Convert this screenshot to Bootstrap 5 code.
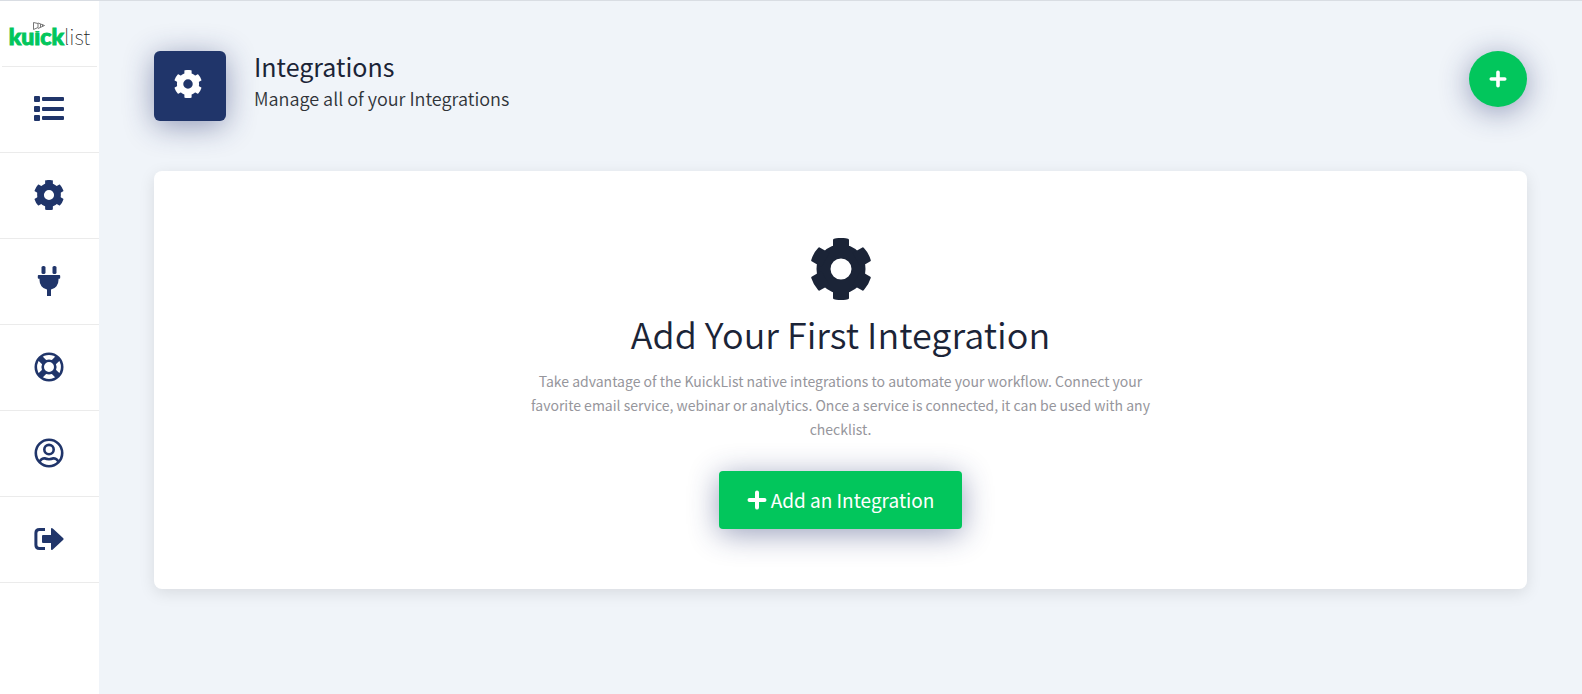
<!DOCTYPE html>
<html lang="en">
<head>
<meta charset="utf-8">
<meta name="viewport" content="width=device-width, initial-scale=1">
<title>KuickList – Integrations</title>
<link href="https://cdn.jsdelivr.net/npm/bootstrap@5.3.0/dist/css/bootstrap.min.css" rel="stylesheet">
<style>
  :root { --navy: #20356a; --ink: #1b2437; --green: #02c65c; }
  body { background: #f0f4f9; color: var(--ink); font-family: "Noto Sans CJK SC", "Noto Sans", sans-serif; }
  .app-shell { min-height: 100vh; border-top: 1px solid #d9dde3; }
  .side-menu { width: 99px; background: #fff; }
  .brand { height: 66px; margin: 0 2px; padding-top: 4px; border-bottom: 1px solid #ebebeb; position: relative; color: #222; text-decoration: none; font-size: 21px; line-height: 24px; font-weight: 100; }
  .brand strong { color: var(--green); font-family: Lato, sans-serif; font-weight: 900; font-size: 23px; -webkit-text-stroke: 1px var(--green); }
  .brand svg { position: absolute; left: 30px; top: 20px; background: #fff; }
  .side-link { height: 86px; padding: 0 2px 2px 0; border-bottom: 1px solid #ebebeb; color: var(--navy); }
  .side-link:hover { background: #f7f9fc; }
  .page { padding: 50px 55px; }
  .glow { box-shadow: 0 5px 30px rgba(32, 45, 106, .45); }
  .page-tile { width: 72px; height: 70px; padding: 0 4px 4px 0; border-radius: 6px; background: var(--navy); color: #fff; }
  .page-title { font-size: 25px; line-height: 30px; font-weight: 400; }
  .page-sub { margin-top: 2px; font-size: 18px; line-height: 30px; font-weight: 350; color: #2f3338; }
  .add-round { width: 58px; height: 56px; border-radius: 50%; background: var(--green); color: #fff; }
  .empty-card { margin-top: 50px; padding: 67px 24px 60px; border: 0; border-radius: 8px; box-shadow: 0 4px 16px rgba(0, 0, 0, .1); }
  .empty-title { margin: 9px 0 12px; font-size: 36px; line-height: 48px; font-weight: 350; }
  .empty-text { max-width: 640px; margin-bottom: 30px; font-size: 14px; line-height: 24px; color: #96969c; }
  .btn-add { height: 58px; padding: 0 28px; border-radius: 4px; font-size: 19px; line-height: 24px; }
  .btn-add, .btn-add:hover, .add-round:hover { background: var(--green); color: #fff; }
</style>
</head>
<body>
<svg width="0" height="0" class="position-absolute" aria-hidden="true">
  <defs>
    <path id="tooth" d="M-8 -18V-29.300Q-8 -30 -7 -30.300A31 31 0 0 1 7 -30.300Q8 -30 8 -29.300V-18Z"/>
    <symbol id="gear" viewBox="-31 -31 62 62">
      <circle r="17.500" fill="none" stroke="currentColor" stroke-width="14"/>
      <g fill="currentColor">
        <use href="#tooth"/><use href="#tooth" transform="rotate(60)"/><use href="#tooth" transform="rotate(120)"/>
        <use href="#tooth" transform="rotate(180)"/><use href="#tooth" transform="rotate(240)"/><use href="#tooth" transform="rotate(300)"/>
      </g>
    </symbol>
    <symbol id="plus" viewBox="0 0 20 20">
      <path d="M10 2.500V17.500M2.500 10H17.500" stroke="currentColor" stroke-width="4" stroke-linecap="round"/>
    </symbol>
  </defs>
</svg>

<div class="app-shell d-flex">
  <nav class="side-menu flex-shrink-0 d-flex flex-column" aria-label="Main">
    <a class="brand d-flex align-items-center justify-content-center" href="#">
      <strong>kuick</strong><span>list</span>
      <svg width="14" height="10" viewBox="0 0 14 10" fill="none" stroke="#777" aria-hidden="true"><path d="M1.500 1.500L6 2.500V6.500L1.500 8.500Z"/><path d="M6 2L12.500 4.500L6 7.500M8.500 3V6.500M10.500 3.500V5.500"/></svg>
    </a>
    <a class="side-link d-flex align-items-center justify-content-center" href="#" aria-label="Checklists">
      <svg width="30" height="30" viewBox="0 0 30 30" fill="currentColor"><rect y="2" width="6" height="6" rx="1"/><rect y="12" width="6" height="6" rx="1"/><rect y="21" width="6" height="6" rx="1"/><rect x="8" y="3" width="22" height="4" rx="1"/><rect x="8" y="13" width="22" height="4" rx="1"/><rect x="8" y="22" width="22" height="4" rx="1"/></svg>
    </a>
    <a class="side-link d-flex align-items-center justify-content-center" href="#" aria-label="Settings">
      <svg width="30" height="30"><use href="#gear"/></svg>
    </a>
    <a class="side-link d-flex align-items-center justify-content-center" href="#" aria-label="Integrations">
      <svg width="30" height="30" viewBox="0 0 30 30" fill="currentColor"><rect x="7.500" width="4" height="8" rx="1.600"/><rect x="18.500" width="4" height="8" rx="1.600"/><path d="M4.600 9H25.400Q26.200 9 26.200 9.900V11.800Q26.200 12.700 25.400 12.700H24.500V14A9.500 9.500 0 0 1 17 23.600V30H13V23.600A9.500 9.500 0 0 1 5.500 14V12.700H4.600Q3.800 12.700 3.800 11.800V9.900Q3.800 9 4.600 9Z"/></svg>
    </a>
    <a class="side-link d-flex align-items-center justify-content-center" href="#" aria-label="Support">
      <svg width="30" height="30" viewBox="0 0 30 30" fill="none" stroke="currentColor"><circle cx="15" cy="15" r="13.200" stroke-width="2.600"/><circle cx="15" cy="15" r="6.300" stroke-width="2.600"/><path d="M5.800 5.800L10.500 10.500M24.200 5.800L19.500 10.500M5.800 24.200L10.500 19.500M24.200 24.200L19.500 19.500" stroke-width="6"/></svg>
    </a>
    <a class="side-link d-flex align-items-center justify-content-center" href="#" aria-label="Account">
      <svg width="30" height="30" viewBox="0 0 30 30" fill="none" stroke="currentColor" stroke-width="2.600"><circle cx="15" cy="15" r="13.200"/><circle cx="15" cy="11.600" r="4.700"/><path d="M5.500 23.700Q7.500 20.300 10.500 20.300Q12.500 21.200 15 21.200T19.500 20.300Q22.500 20.300 24.500 23.700"/></svg>
    </a>
    <a class="side-link d-flex align-items-center justify-content-center" href="#" aria-label="Log out">
      <svg width="30" height="30" viewBox="0 0 30 30"><path d="M11 5.400H5.500Q1.900 5.400 1.900 9V21Q1.900 24.600 5.500 24.600H11" fill="none" stroke="currentColor" stroke-width="3"/><path d="M9 11H17V5.200Q17 3.200 18.800 4.500L29.300 14.200Q30 15 29.300 15.800L18.800 25.500Q17 26.800 17 24.800V19H9Q8 19 8 18V12Q8 11 9 11Z" fill="currentColor"/></svg>
    </a>
  </nav>

  <main class="page flex-grow-1">
    <header class="d-flex align-items-start">
      <div class="page-tile glow d-flex align-items-center justify-content-center flex-shrink-0">
        <svg width="28" height="28" aria-hidden="true"><use href="#gear"/></svg>
      </div>
      <div class="ms-4 ps-1 flex-grow-1">
        <h1 class="page-title mb-0">Integrations</h1>
        <p class="page-sub mb-0">Manage all of your Integrations</p>
      </div>
      <button type="button" class="add-round glow btn border-0 p-0 d-flex align-items-center justify-content-center" aria-label="Add integration">
        <svg width="18" height="18"><use href="#plus"/></svg>
      </button>
    </header>

    <section class="empty-card card align-items-center text-center">
      <svg width="62" height="62" aria-hidden="true"><use href="#gear"/></svg>
      <h2 class="empty-title">Add Your First Integration</h2>
      <p class="empty-text">Take advantage of the KuickList native integrations to automate your workflow. Connect your favorite email service, webinar or analytics. Once a service is connected, it can be used with any checklist.</p>
      <button type="button" class="btn-add glow btn border-0 d-flex align-items-center gap-1">
        <svg width="20" height="20" aria-hidden="true"><use href="#plus"/></svg>Add an Integration
      </button>
    </section>
  </main>
</div>
<script src="https://cdn.jsdelivr.net/npm/bootstrap@5.3.0/dist/js/bootstrap.bundle.min.js"></script>
</body>
</html>
